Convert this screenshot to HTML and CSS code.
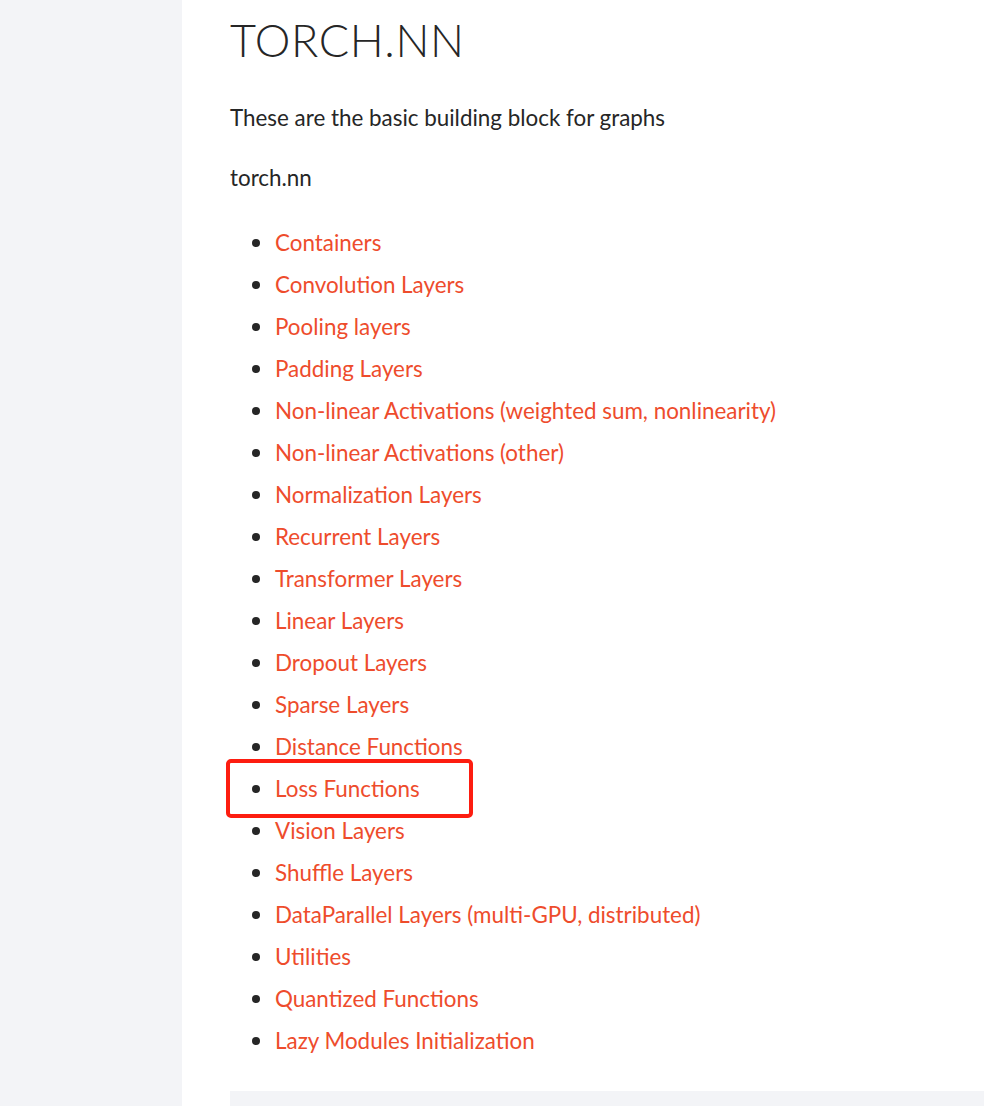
FILE: index.html
```html
<!DOCTYPE html>
<html>
<head>
<meta charset="utf-8">
<link rel="stylesheet" href="styles.css">
</head>
<body>
<div class="page">
  <aside class="sidebar"></aside>
  <main class="content">
    <h1 class="title">TORCH.NN</h1>
    <p class="intro">These are the basic building block for graphs</p>
    <p class="module">torch.nn</p>
    <ul class="toc">
      <li><a href="#">Containers</a></li>
      <li><a href="#">Convolution Layers</a></li>
      <li><a href="#">Pooling layers</a></li>
      <li><a href="#">Padding Layers</a></li>
      <li><a href="#">Non-linear Activations (weighted sum, nonlinearity)</a></li>
      <li><a href="#">Non-linear Activations (other)</a></li>
      <li><a href="#">Normalization Layers</a></li>
      <li><a href="#">Recurrent Layers</a></li>
      <li><a href="#">Transformer Layers</a></li>
      <li><a href="#">Linear Layers</a></li>
      <li><a href="#">Dropout Layers</a></li>
      <li><a href="#">Sparse Layers</a></li>
      <li><a href="#">Distance Functions</a></li>
      <li class="marked"><a href="#">Loss Functions</a><span class="highlight"></span></li>
      <li><a href="#">Vision Layers</a></li>
      <li><a href="#">Shuffle Layers</a></li>
      <li><a href="#">DataParallel Layers (multi-GPU, distributed)</a></li>
      <li><a href="#">Utilities</a></li>
      <li><a href="#">Quantized Functions</a></li>
      <li><a href="#">Lazy Modules Initialization</a></li>
    </ul>
    <div class="next-block"></div>
  </main>
</div>
</body>
</html>
```

FILE: styles.css
```css
html, body {
  margin: 0;
  padding: 0;
  background: #ffffff;
}
body {
  font-family: "Lato", "Open Sans", sans-serif;
  color: #262626;
  overflow: hidden;
  height: 1106px;
}
.page {
  display: flex;
  height: 1106px;
}
.sidebar {
  width: 182px;
  flex: none;
  background: #f3f4f7;
}
.content {
  flex: 1;
  padding-left: 48px;
  display: flex;
  flex-direction: column;
}
.title {
  margin: 12px 0 0 0;
  font-weight: 300;
  font-size: 45px;
  letter-spacing: 0.6px;
  line-height: 56px;
  color: #262626;
}
.intro {
  margin: 37px 0 0 0;
  font-size: 22.4px;
  line-height: 26px;
}
.module {
  margin: 34px 0 0 0;
  font-size: 22.4px;
  line-height: 26px;
}
.toc {
  list-style: none;
  margin: 31px 0 0 0;
  padding: 0 0 0 22px;
}
.toc li {
  position: relative;
  height: 42px;
  line-height: 42px;
  font-size: 22.4px;
  padding-left: 23px;
}
.toc li::before {
  content: "";
  position: absolute;
  left: 0;
  top: 17px;
  width: 8px;
  height: 8px;
  border-radius: 50%;
  background: #262626;
}
.toc a {
  color: #ee4c2c;
  text-decoration: none;
}
.highlight {
  position: absolute;
  left: -26px;
  top: -9px;
  width: 239px;
  height: 51px;
  border: 4px solid #fd1d10;
  border-radius: 5px;
}
.next-block {
  margin-top: 29px;
  height: 40px;
  background: #f3f4f7;
}
```
